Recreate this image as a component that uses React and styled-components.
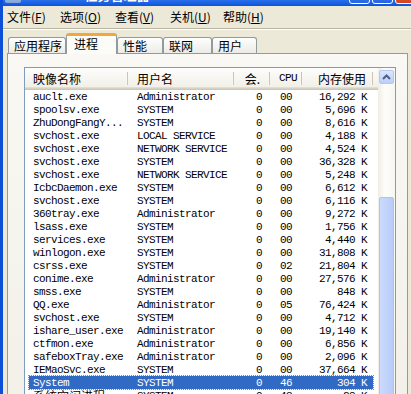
import React from "react";
import styled, { createGlobalStyle, css } from "styled-components";

const GlobalStyle = createGlobalStyle`
  html, body {
    margin: 0;
    padding: 0;
    background: #ece9d8;
  }
`;

const cjk = `"Noto Sans CJK SC", "Liberation Sans", sans-serif`;
const mono = `"Liberation Mono", "Noto Sans CJK SC", monospace`;

const rows = [
  ["auclt.exe", "Administrator", "0", "00", "16,292 K"],
  ["spoolsv.exe", "SYSTEM", "0", "00", "5,696 K"],
  ["ZhuDongFangY...", "SYSTEM", "0", "00", "8,616 K"],
  ["svchost.exe", "LOCAL SERVICE", "0", "00", "4,188 K"],
  ["svchost.exe", "NETWORK SERVICE", "0", "00", "4,524 K"],
  ["svchost.exe", "SYSTEM", "0", "00", "36,328 K"],
  ["svchost.exe", "NETWORK SERVICE", "0", "00", "5,248 K"],
  ["IcbcDaemon.exe", "SYSTEM", "0", "00", "6,612 K"],
  ["svchost.exe", "SYSTEM", "0", "00", "6,116 K"],
  ["360tray.exe", "Administrator", "0", "00", "9,272 K"],
  ["lsass.exe", "SYSTEM", "0", "00", "1,756 K"],
  ["services.exe", "SYSTEM", "0", "00", "4,440 K"],
  ["winlogon.exe", "SYSTEM", "0", "00", "31,808 K"],
  ["csrss.exe", "SYSTEM", "0", "02", "21,804 K"],
  ["conime.exe", "Administrator", "0", "00", "27,576 K"],
  ["smss.exe", "SYSTEM", "0", "00", "848 K"],
  ["QQ.exe", "Administrator", "0", "05", "76,424 K"],
  ["svchost.exe", "SYSTEM", "0", "00", "4,712 K"],
  ["ishare_user.exe", "Administrator", "0", "00", "19,140 K"],
  ["ctfmon.exe", "Administrator", "0", "00", "6,856 K"],
  ["safeboxTray.exe", "Administrator", "0", "00", "2,096 K"],
  ["IEMaoSvc.exe", "SYSTEM", "0", "00", "37,664 K"],
  ["System", "SYSTEM", "0", "46", "304 K", true],
  ["系统空闲进程", "SYSTEM", "0", "43", "28 K"],
];

const menus = [
  ["文件", "F", 53],
  ["选项", "O", 55],
  ["查看", "V", 55],
  ["关机", "U", 53],
  ["帮助", "H", 60],
];

const tabs = [
  ["应用程序", 58],
  ["进程", 51, true],
  ["性能", 46],
  ["联网", 49],
  ["用户", 45],
];

const Screen = styled.div`
  width: 411px;
  height: 394px;
  overflow: hidden;
  background: #ece9d8;
`;

const Window = styled.div`
  width: 418px;
  border-left: 3px solid #0b50d6;
  border-right: 3px solid #0b50d6;
  background: #ece9d8;
  display: flex;
  flex-direction: column;
`;

const TitleBar = styled.div`
  height: 6px;
  overflow: hidden;
  background: linear-gradient(#2a70ea, #0a55dc);
`;

const TitleInner = styled.div`
  height: 26px;
  margin-top: -20px;
  display: flex;
  align-items: flex-end;
  padding: 0 5px 2px 2px;
  box-sizing: border-box;
`;

const TitleIcon = styled.div`
  width: 16px;
  height: 16px;
  margin-bottom: 1px;
  background: linear-gradient(#d9e4f7, #7fa3da);
  border-radius: 2px;
`;

const TitleText = styled.div`
  margin-left: 3px;
  font-family: "Liberation Sans", "Noto Sans CJK SC", sans-serif;
  font-weight: bold;
  font-size: 13px;
  line-height: 16px;
  color: #fff;
`;

const TitleButtons = styled.div`
  margin-left: auto;
  display: flex;
  gap: 2px;
`;

const CaptionButton = styled.div`
  width: 21px;
  height: 21px;
  box-sizing: border-box;
  border: 1px solid #fff;
  border-radius: 3px;
  background: ${(p) =>
    p.$close
      ? "linear-gradient(#e67c5f, #d2431c)"
      : "linear-gradient(#5a8ff5, #2763e3)"};
`;

const MenuBar = styled.div`
  height: 22px;
  display: flex;
  align-items: center;
  padding-left: 4px;
  border-bottom: 1px solid #b7b4a4;
  box-shadow: 0 1px 0 #fff;
  font-family: ${cjk};
  font-size: 12px;
  color: #000;
`;

const MenuItem = styled.div`
  width: ${(p) => p.$w}px;
  flex: none;
  line-height: 22px;
  white-space: nowrap;
  u {
    text-decoration: underline;
  }
`;

const TabStrip = styled.div`
  height: 24px;
  display: flex;
  align-items: flex-end;
  padding-left: 5px;
`;

const Tab = styled.div`
  width: ${(p) => p.$w}px;
  flex: none;
  box-sizing: border-box;
  height: 16px;
  border: 1px solid #919b9c;
  border-bottom: none;
  border-radius: 3px 3px 0 0;
  background: linear-gradient(#fefefe, #ecebe6);
  font-family: ${cjk};
  font-size: 12px;
  line-height: 15px;
  padding-left: 5px;
  color: #000;
  ${(p) =>
    p.$active &&
    css`
      position: relative;
      z-index: 1;
      height: 21px;
      margin-bottom: -1px;
      border-top: 3px solid #f3a63a;
      background: #fbfbf8;
      padding-left: 7px;
      line-height: 16px;
    `}
`;

const Panel = styled.div`
  width: 401px;
  box-sizing: border-box;
  margin-left: 4px;
  height: 360px;
  border: 1px solid #919b9c;
  background: linear-gradient(#f9f8f4, #f2f0e8);
  padding: 13px 11px 0 16px;
`;

const ListView = styled.div`
  width: 372px;
  height: 340px;
  box-sizing: border-box;
  border: 1px solid #7f9db9;
  background: #fff;
  display: flex;
`;

const ListMain = styled.div`
  flex: 1;
  display: flex;
  flex-direction: column;
  min-width: 0;
`;

const Header = styled.div`
  height: 22px;
  display: grid;
  grid-template-columns: 103px 106px 36px 32px 71px 1fr;
  background: linear-gradient(#fdfdfc, #efede4);
  box-shadow: inset 0 -1px 0 #cbc7b8, inset 0 -2px 0 #d6d2c2,
    inset 0 -3px 0 #e2decd;
  font-family: ${cjk};
  font-size: 12px;
  color: #000;
`;

const HeadCell = styled.div`
  position: relative;
  line-height: 21px;
  white-space: nowrap;
  overflow: hidden;
  text-align: ${(p) => (p.$right ? "right" : "left")};
  padding: ${(p) => (p.$right ? `0 ${p.$pad}px 0 0` : `0 0 0 ${p.$pad}px`)};
  ${(p) =>
    p.$mono &&
    css`
      font-family: ${mono};
      font-size: 11px;
      letter-spacing: -0.6px;
    `}
  &::after {
    content: "";
    position: absolute;
    right: 0;
    top: 4px;
    bottom: 5px;
    width: 1px;
    background: #c9c6b5;
    box-shadow: -1px 0 0 #f8f7f2;
    display: ${(p) => (p.$filler ? "none" : "block")};
  }
`;

const Body = styled.div`
  padding-left: 4px;
  display: flex;
  flex-direction: column;
`;

const Row = styled.div`
  width: 344px;
  height: 13px;
  display: grid;
  grid-template-columns: 99px 106px 36px 32px 71px;
  font-family: ${mono};
  font-size: 11px;
  letter-spacing: -0.6px;
  line-height: 14px;
  color: #000;
  ${(p) =>
    p.$selected &&
    css`
      background: #316ac5;
      color: #fff;
      outline: 1px dotted #8a8a8a;
    `}
`;

const Cell = styled.div`
  white-space: nowrap;
  overflow: hidden;
  text-align: ${(p) => (p.$right ? "right" : "left")};
  padding: ${(p) => (p.$right ? `0 ${p.$pad}px 0 0` : `0 0 0 ${p.$pad}px`)};
`;

const NameCell = styled(Cell)`
  font-family: ${(p) => (p.$cjk ? cjk : mono)};
  font-size: ${(p) => (p.$cjk ? "12px" : "11px")};
  letter-spacing: ${(p) => (p.$cjk ? "0" : "-0.6px")};
  line-height: ${(p) => (p.$cjk ? "13px" : "14px")};
`;

const ScrollBar = styled.div`
  width: 17px;
  flex: none;
  display: flex;
  flex-direction: column;
  background: linear-gradient(to right, #eeede5, #fdfdfa 40%, #f7f6f1);
`;

const ArrowButton = styled.div`
  width: 15px;
  height: 16px;
  margin: 2px 1px 0 1px;
  box-sizing: border-box;
  border: 1px solid #b4c8f6;
  border-radius: 2px;
  background: linear-gradient(#dbe6fe, #bbcefb);
  display: flex;
  align-items: center;
  justify-content: center;
`;

const Thumb = styled.div`
  width: 15px;
  height: 240px;
  margin: ${(p) => p.$top}px 1px 0 1px;
  box-sizing: border-box;
  border: 1px solid #aec3f3;
  border-radius: 2px;
  background: linear-gradient(to right, #cbdafd, #c2d3fc 50%, #b8cbf9);
`;

const hasCjk = (s) => /[\u4e00-\u9fff]/.test(s);

export default function App() {
  return (
    <>
      <GlobalStyle />
      <Screen>
        <Window>
          <TitleBar>
            <TitleInner>
              <TitleIcon />
              <TitleText>Windows 任务管理器</TitleText>
              <TitleButtons>
                <CaptionButton />
                <CaptionButton />
                <CaptionButton $close />
              </TitleButtons>
            </TitleInner>
          </TitleBar>
          <MenuBar>
            {menus.map(([label, key, w]) => (
              <MenuItem key={key} $w={w}>
                {label}(<u>{key}</u>)
              </MenuItem>
            ))}
          </MenuBar>
          <TabStrip>
            {tabs.map(([label, w, active]) => (
              <Tab key={label} $w={w} $active={active}>
                {label}
              </Tab>
            ))}
          </TabStrip>
          <Panel>
            <ListView>
              <ListMain>
                <Header>
                  <HeadCell $pad={8}>映像名称</HeadCell>
                  <HeadCell $pad={9}>用户名</HeadCell>
                  <HeadCell $right $pad={10}>会.</HeadCell>
                  <HeadCell $pad={9} $mono>CPU</HeadCell>
                  <HeadCell $right $pad={7}>内存使用</HeadCell>
                  <HeadCell $filler />
                </Header>
                <Body>
                  {rows.map(([name, user, session, cpu, mem, sel], i) => (
                    <Row key={i} $selected={sel}>
                      <NameCell $pad={4} $cjk={hasCjk(name)}>
                        {name}
                      </NameCell>
                      <Cell $pad={9}>{user}</Cell>
                      <Cell $right $pad={8}>{session}</Cell>
                      <Cell $pad={10}>{cpu}</Cell>
                      <Cell $right $pad={6}>{mem}</Cell>
                    </Row>
                  ))}
                </Body>
              </ListMain>
              <ScrollBar>
                <ArrowButton>
                  <svg width="9" height="6" viewBox="0 0 9 6">
                    <path
                      d="M1 5 L4.5 1.5 L8 5"
                      fill="none"
                      stroke="#4d6185"
                      strokeWidth="2"
                    />
                  </svg>
                </ArrowButton>
                <Thumb $top={113} />
              </ScrollBar>
            </ListView>
          </Panel>
        </Window>
      </Screen>
    </>
  );
}
